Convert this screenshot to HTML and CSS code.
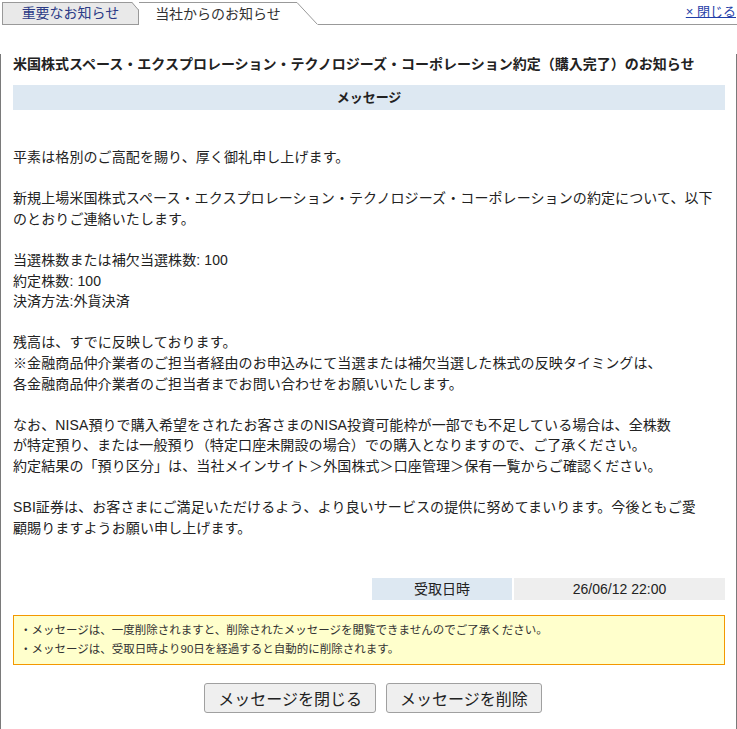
FILE: index.html
```html
<!DOCTYPE html>
<html lang="ja">
<head>
  <meta charset="UTF-8">
  <meta name="viewport" content="width=device-width, initial-scale=1.0">
  <title>お知らせ</title>
  <link rel="stylesheet" href="styles.css">
</head>
<body>
  <div class="tabs">
    <div class="tab">
      重要なお知らせ
      <svg class="tab-fold" width="7" height="8" viewBox="0 0 7 8">
        <polygon points="0,0 7,0 7,8" fill="#fff"/>
        <line x1="0" y1="0.5" x2="6.5" y2="8" stroke="#999" stroke-width="1"/>
      </svg>
    </div>
    <div class="tab active">当社からのお知らせ</div>
    <svg class="tab-slope" width="21" height="25" viewBox="0 0 21 25">
      <line x1="0" y1="2.5" x2="20.5" y2="24.5" stroke="#999" stroke-width="1"/>
    </svg>
    <div class="tab-rest">
      <a href="#" class="close-link">× 閉じる</a>
    </div>
  </div>

  <div class="panel">
    <h1 class="msg-title">米国株式スペース・エクスプロレーション・テクノロジーズ・コーポレーション約定（購入完了）のお知らせ</h1>
    <div class="msg-bar">メッセージ</div>

    <div class="msg-body">
      <p>平素は格別のご高配を賜り、厚く御礼申し上げます。</p>
      <p>新規上場米国株式スペース・エクスプロレーション・テクノロジーズ・コーポレーションの約定について、以下<br>のとおりご連絡いたします。</p>
      <p>当選株数または補欠当選株数: 100<br>約定株数: 100<br>決済方法:外貨決済</p>
      <p>残高は、すでに反映しております。<br>※金融商品仲介業者のご担当者経由のお申込みにて当選または補欠当選した株式の反映タイミングは、<br>各金融商品仲介業者のご担当者までお問い合わせをお願いいたします。</p>
      <p>なお、NISA預りで購入希望をされたお客さまのNISA投資可能枠が一部でも不足している場合は、全株数<br>が特定預り、または一般預り（特定口座未開設の場合）での購入となりますので、ご了承ください。<br>約定結果の「預り区分」は、当社メインサイト＞外国株式＞口座管理＞保有一覧からご確認ください。</p>
      <p>SBI証券は、お客さまにご満足いただけるよう、より良いサービスの提供に努めてまいります。今後ともご愛<br>顧賜りますようお願い申し上げます。</p>
    </div>

    <div class="received">
      <div class="received-label">受取日時</div>
      <div class="received-value">26/06/12 22:00</div>
    </div>

    <div class="notice">
      <div>・メッセージは、一度削除されますと、削除されたメッセージを閲覧できませんのでご了承ください。</div>
      <div>・メッセージは、受取日時より90日を経過すると自動的に削除されます。</div>
    </div>

    <div class="actions">
      <button type="button" class="btn">メッセージを閉じる</button>
      <button type="button" class="btn">メッセージを削除</button>
    </div>
  </div>
</body>
</html>
```

FILE: styles.css
```css
body {
  margin: 0;
  padding: 0;
  font-family: "Liberation Sans", "Noto Sans CJK JP", sans-serif;
  color: #333;
  background: #fff;
  width: 737px;
}

.tabs {
  display: flex;
  align-items: flex-end;
  height: 25px;
}

.tab {
  position: relative;
  box-sizing: border-box;
  height: 23px;
  width: 137px;
  margin-left: 2px;
  border: 1px solid #999;
  background-color: #e9e9e9;
  color: #2b3a86;
  font-size: 14px;
  line-height: 21px;
  text-align: center;
}

.tab-fold {
  position: absolute;
  top: -1px;
  right: -1px;
}

.tab.active {
  width: 158px;
  margin-left: 0;
  border: none;
  border-top: 1px solid #999;
  background-color: #fff;
  color: #333;
  line-height: 22px;
}

.tab-slope {
  display: block;
  flex: none;
}

.tab-rest {
  flex: 1;
  box-sizing: border-box;
  height: 25px;
  border-bottom: 1px solid #999;
  text-align: right;
  padding-right: 1px;
}

.close-link {
  font-size: 13px;
  line-height: 24px;
  color: #1f3ea8;
  text-decoration: underline;
}

.panel {
  box-sizing: border-box;
  height: 703px;
  border: 1px solid #7a7a7a;
  border-top: none;
  padding: 0 11px 0 12px;
}

.msg-title {
  margin: 29px 0 0;
  font-size: 14px;
  line-height: 20px;
  font-weight: bold;
  color: #222;
}

.msg-bar {
  margin-top: 11px;
  height: 25px;
  line-height: 25px;
  background-color: #dde8f2;
  text-align: center;
  font-size: 13px;
  font-weight: bold;
  color: #222;
}

.msg-body {
  margin-top: 37px;
  font-size: 14px;
  line-height: 20.6px;
  color: #222;
  letter-spacing: 0.1px;
}

.msg-body p {
  margin: 0 0 20.6px;
}

.msg-body p:last-child {
  margin-bottom: 0;
}

.received {
  display: flex;
  justify-content: flex-end;
  gap: 2px;
  margin-top: 40px;
  font-size: 14px;
  line-height: 22px;
  text-align: center;
  color: #222;
}

.received-label {
  width: 140px;
  background-color: #dde8f2;
}

.received-value {
  width: 211px;
  background-color: #eee;
}

.notice {
  margin-top: 15px;
  padding: 5px 6px;
  border: 1px solid #f39800;
  background-color: #ffffcc;
  font-size: 11.5px;
  line-height: 19px;
  color: #333;
}

.actions {
  display: flex;
  justify-content: center;
  gap: 10px;
  margin-top: 18px;
  padding-left: 8px;
}

.btn {
  height: 30px;
  padding: 0 13px;
  font-family: "Liberation Sans", "Noto Sans CJK JP", sans-serif;
  font-size: 16px;
  color: #222;
  background-color: #efefef;
  border: 1px solid #a0a0a0;
  border-radius: 3px;
  cursor: pointer;
}
```
